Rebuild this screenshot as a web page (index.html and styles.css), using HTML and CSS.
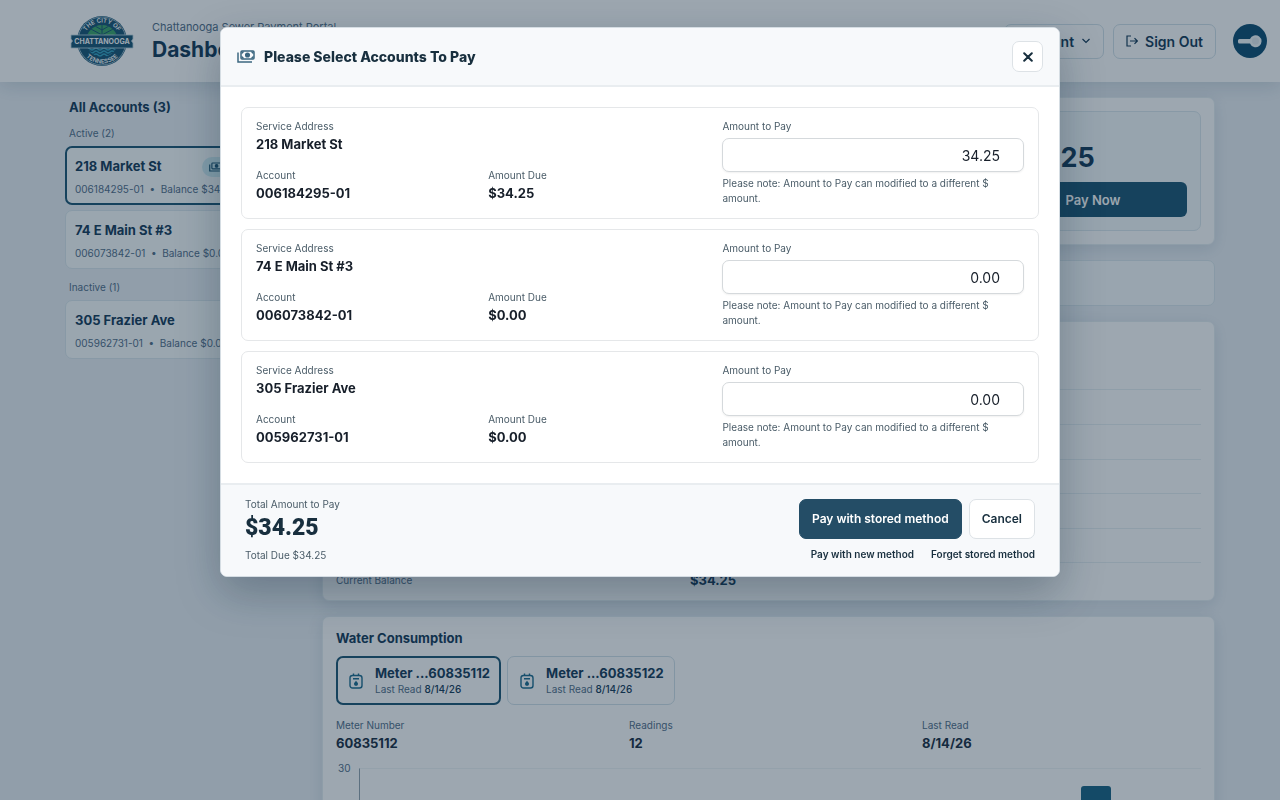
FILE: index.html
```html
<!DOCTYPE html>
<html lang="en">
<head>
    <meta charset="UTF-8">
    <meta name="viewport" content="width=device-width, initial-scale=1.0">
    <title>Dashboard</title>
    <link rel="stylesheet" href="styles.css">
</head>
<body>
    <header class="topbar">
        <svg class="logo" viewBox="0 0 64 52" role="img" aria-label="City logo">
            <defs>
                <path id="arcTop" d="M13.500 26a18.500 18.500 0 0 1 37 0"/>
                <path id="arcBottom" d="M9.500 26a22.500 22.500 0 0 0 45 0"/>
                <clipPath id="inner"><circle cx="32" cy="26" r="16"/></clipPath>
            </defs>
            <circle cx="32" cy="26" r="25" fill="#1a5676"/>
            <circle cx="32" cy="26" r="24" fill="none" stroke="#c3d8e2" stroke-width="0.7"/>
            <g clip-path="url(#inner)">
                <rect x="14" y="8" width="36" height="18" fill="#3fa66b"/>
                <rect x="14" y="26" width="36" height="18" fill="#1a5676"/>
                <path d="M32 8v16M32 15l-7-4M32 15l7-4M32 20l-13-7M32 20l13-7M32 24l-16-5M32 24l16-5" stroke="#1a5676" stroke-width="1" fill="none"/>
                <path d="M16 34q2-2 4 0t4 0 4 0 4 0 4 0 4 0 4 0 4 0M16 37q2-2 4 0t4 0 4 0 4 0 4 0 4 0 4 0 4 0M16 40q2-2 4 0t4 0 4 0 4 0 4 0 4 0 4 0 4 0" stroke="#38a5c4" stroke-width="1.4" fill="none"/>
            </g>
            <path d="M1 20h62v4l-1.500 2 1.500 2v5H1v-5l1.500-2L1 24z" fill="#1a5676" stroke="#c3d8e2" stroke-width="0.8"/>
            <text x="32" y="28.800" class="logo-name">CHATTANOOGA</text>
            <text class="logo-arc"><textPath href="#arcTop" startOffset="50%">THE CITY OF</textPath></text>
            <text class="logo-arc"><textPath href="#arcBottom" startOffset="50%">TENNESSEE</textPath></text>
        </svg>
        <div class="brand">
            <p>Chattanooga Sewer Payment Portal</p>
            <h1>Dashboard</h1>
        </div>
        <div class="actions">
            <button type="button" class="btn-outline">Account
                <svg width="10" height="10" viewBox="0 0 10 10" fill="none" stroke="currentColor" stroke-width="1.2"><path d="M1.500 3l3.500 3.500L8.500 3"/></svg>
            </button>
            <button type="button" class="btn-outline">
                <svg width="12" height="12" viewBox="0 0 12 12" fill="none" stroke="currentColor" stroke-width="1.2"><path d="M5 1H1v10h4M4 6h7.300M8.500 3.200L11.300 6 8.500 8.800"/></svg>
                Sign Out</button>
            <svg class="avatar" viewBox="0 0 34 34">
                <circle cx="17" cy="17" r="17" fill="#104f74"/>
                <path d="M6.500 15h10.500a6 6 0 1 1 0 4.500H6.500a1.500 1.500 0 0 1-1.500-1.500v-1.500a1.500 1.500 0 0 1 1.500-1.500z" fill="#f4f8fa"/>
                <circle cx="22.500" cy="17" r="3.500" fill="#e4ecf0"/>
            </svg>
        </div>
    </header>

    <div class="container">
        <aside class="sidebar">
            <h2>All Accounts (3)</h2>
            <h3>Active (2)</h3>
            <a href="#" class="account selected">
                <strong>218 Market St</strong>
                <span>006184295-01 &nbsp;•&nbsp; Balance $34.25</span>
                <em class="pill">
                    <svg width="13" height="10" viewBox="0 0 18 13" fill="none" stroke="currentColor" stroke-width="1.600"><path d="M1 3v9h14"/><rect x="4" y="1" width="13" height="8" rx="1"/><circle cx="10.500" cy="5" r="1.800" fill="currentColor"/></svg>
                </em>
            </a>
            <a href="#" class="account">
                <strong>74 E Main St #3</strong>
                <span>006073842-01 &nbsp;•&nbsp; Balance $0.00</span>
            </a>
            <h3>Inactive (1)</h3>
            <a href="#" class="account">
                <strong>305 Frazier Ave</strong>
                <span>005962731-01 &nbsp;•&nbsp; Balance $0.00</span>
            </a>
        </aside>

        <main class="main">
            <section class="card summary">
                <div class="due-box">
                    <p>Due</p>
                    <b>$34.25</b>
                    <button type="button">Pay Now</button>
                </div>
            </section>
            <section class="card strip"></section>
            <section class="card details">
                <div class="row row-first"></div>
                <div class="row"></div>
                <div class="row"></div>
                <div class="row"></div>
                <div class="row"></div>
                <div class="row"></div>
                <div class="row"><span>Current Balance</span><b>$34.25</b></div>
            </section>
            <section class="card usage">
                <h2>Water Consumption</h2>
                <div class="meters">
                    <button type="button" class="meter selected">
                        <svg width="14" height="16" viewBox="0 0 14 16" fill="none" stroke="currentColor" stroke-width="1.400"><rect x="1" y="2.500" width="12" height="12.500" rx="2.500"/><path d="M4.500 0.500V3M9.500 0.500V3M4 5.800h6"/><path d="M7 7.800l1.800 2.200a2 2 0 1 1-3.600 0z" fill="currentColor" stroke="none"/></svg>
                        <span><strong>Meter ...60835112</strong><small>Last Read <b>8/14/26</b></small></span>
                    </button>
                    <button type="button" class="meter">
                        <svg width="14" height="16" viewBox="0 0 14 16" fill="none" stroke="currentColor" stroke-width="1.400"><rect x="1" y="2.500" width="12" height="12.500" rx="2.500"/><path d="M4.500 0.500V3M9.500 0.500V3M4 5.800h6"/><path d="M7 7.800l1.800 2.200a2 2 0 1 1-3.600 0z" fill="currentColor" stroke="none"/></svg>
                        <span><strong>Meter ...60835122</strong><small>Last Read <b>8/14/26</b></small></span>
                    </button>
                </div>
                <div class="stats">
                    <div><span>Meter Number</span><b>60835112</b></div>
                    <div><span>Readings</span><b>12</b></div>
                    <div><span>Last Read</span><b>8/14/26</b></div>
                </div>
                <div class="chart">
                    <span class="tick">30</span>
                    <div class="bars">
                        <i style="height: 40%"></i>
                        <i style="height: 45%"></i>
                        <i style="height: 50%"></i>
                        <i style="height: 42%"></i>
                        <i style="height: 55%"></i>
                        <i style="height: 60%"></i>
                        <i style="height: 48%"></i>
                        <i style="height: 52%"></i>
                        <i style="height: 58%"></i>
                        <i style="height: 62%"></i>
                        <i style="height: 91%"></i>
                        <i style="height: 50%"></i>
                    </div>
                </div>
            </section>
        </main>
    </div>

    <div class="backdrop">
        <form class="modal" role="dialog" aria-modal="true" aria-labelledby="modalTitle">
            <div class="modal-header">
                <svg width="18" height="13" viewBox="0 0 18 13" fill="none" stroke="currentColor" stroke-width="1.500"><path d="M1 2.500v9.500h14"/><rect x="4" y="1" width="13" height="8" rx="1"/><circle cx="10.500" cy="5" r="1.800" fill="currentColor"/><path d="M4.500 3.500l2-2M16.500 3.500l-2-2M4.500 6.500l2 2M16.500 6.500l-2 2"/></svg>
                <h2 id="modalTitle">Please Select Accounts To Pay</h2>
                <button type="button" class="close" aria-label="Close">
                    <svg width="10" height="10" viewBox="0 0 10 10" stroke="currentColor" stroke-width="2" stroke-linecap="round"><path d="M1.200 1.200l7.600 7.600M8.800 1.200L1.200 8.800"/></svg>
                </button>
            </div>
            <div class="modal-body">
                <div class="pay-card">
                    <div class="info">
                        <div class="wide"><span>Service Address</span><b>218 Market St</b></div>
                        <div><span>Account</span><b>006184295-01</b></div>
                        <div><span>Amount Due</span><b>$34.25</b></div>
                    </div>
                    <div class="amount">
                        <label for="pay1">Amount to Pay</label>
                        <input type="text" id="pay1" inputmode="decimal" value="34.25">
                        <p>Please note: Amount to Pay can modified to a different $ amount.</p>
                    </div>
                </div>
                <div class="pay-card">
                    <div class="info">
                        <div class="wide"><span>Service Address</span><b>74 E Main St #3</b></div>
                        <div><span>Account</span><b>006073842-01</b></div>
                        <div><span>Amount Due</span><b>$0.00</b></div>
                    </div>
                    <div class="amount">
                        <label for="pay2">Amount to Pay</label>
                        <input type="text" id="pay2" inputmode="decimal" value="0.00">
                        <p>Please note: Amount to Pay can modified to a different $ amount.</p>
                    </div>
                </div>
                <div class="pay-card">
                    <div class="info">
                        <div class="wide"><span>Service Address</span><b>305 Frazier Ave</b></div>
                        <div><span>Account</span><b>005962731-01</b></div>
                        <div><span>Amount Due</span><b>$0.00</b></div>
                    </div>
                    <div class="amount">
                        <label for="pay3">Amount to Pay</label>
                        <input type="text" id="pay3" inputmode="decimal" value="0.00">
                        <p>Please note: Amount to Pay can modified to a different $ amount.</p>
                    </div>
                </div>
            </div>
            <div class="modal-footer">
                <div class="totals">
                    <span>Total Amount to Pay</span>
                    <b>$34.25</b>
                    <span>Total Due $34.25</span>
                </div>
                <div class="choices">
                    <div class="buttons">
                        <button type="submit" class="primary">Pay with stored method</button>
                        <button type="button" class="cancel">Cancel</button>
                    </div>
                    <div class="links">
                        <a href="#">Pay with new method</a>
                        <a href="#">Forget stored method</a>
                    </div>
                </div>
            </div>
        </form>
    </div>
</body>
</html>
```
FILE: styles.css
```css
* {
    box-sizing: border-box;
}
body {
    font-family: Inter, "Liberation Sans", sans-serif;
    font-size: 13px;
    color: #173c5a;
    background: #ecf1f6;
    margin: 0;
    height: 100vh;
    overflow: hidden;
}
h1, h2, h3, p {
    margin: 0;
}
button, input {
    font-family: inherit;
    color: inherit;
}
a {
    text-decoration: none;
    color: inherit;
}

/* top bar */
.topbar {
    display: flex;
    align-items: center;
    height: 82px;
    padding: 0 13px 0 70px;
    background: white;
    box-shadow: 0 4px 18px rgba(20, 60, 90, 0.15);
}
.logo {
    width: 64px;
    height: 52px;
}
.logo-name {
    font-size: 7px;
    font-weight: 700;
    fill: white;
    text-anchor: middle;
}
.logo-arc {
    font-size: 6px;
    font-weight: 600;
    fill: white;
    text-anchor: middle;
}
.brand {
    margin-left: 18px;
    padding-top: 3px;
}
.brand p {
    font-size: 11px;
    line-height: 14px;
    color: #54708a;
}
.brand h1 {
    font-size: 21px;
    line-height: 32px;
}
.actions {
    display: flex;
    align-items: center;
    gap: 9px;
    margin-left: auto;
}
.btn-outline {
    display: flex;
    align-items: center;
    gap: 7px;
    height: 35px;
    padding: 0 12px;
    font-size: 14px;
    font-weight: 600;
    background: white;
    border: 1px solid #d3e2ea;
    border-radius: 7px;
}
.avatar {
    width: 34px;
    height: 34px;
    margin-left: 8px;
}

/* page */
.container {
    display: flex;
    gap: 15px;
    padding: 15px 65px;
}
.sidebar {
    flex: 0 0 242px;
}
.sidebar h2, .usage h2 {
    font-size: 13px;
    line-height: 20px;
}
.sidebar h2 {
    padding: 0 4px;
    margin-bottom: 3px;
}
.sidebar h3 {
    padding: 6px 4px;
    font-size: 10px;
    line-height: 14px;
    font-weight: 400;
    color: #54708a;
}
.account {
    display: block;
    position: relative;
    height: 59px;
    margin-bottom: 5px;
    padding: 9px;
    background: #fafdfe;
    border: 1px solid #dce8ee;
    border-radius: 7px;
}
.account.selected {
    border: 2px solid #1e5775;
    padding: 8px;
}
.account strong, .account span {
    display: block;
}
.account strong {
    line-height: 20px;
}
.account span {
    margin-top: 6px;
    font-size: 10px;
    line-height: 14px;
    color: #54708a;
}
.pill {
    position: absolute;
    top: 9px;
    right: 9px;
    display: flex;
    align-items: center;
    width: 94px;
    height: 20px;
    padding-left: 7px;
    border-radius: 10px;
    background: #d2eef4;
    color: #1e5775;
}
.main {
    flex: 1;
    display: flex;
    flex-direction: column;
    gap: 15px;
    min-width: 0;
}
.card {
    background: white;
    border: 1px solid #e6eef2;
    border-radius: 7px;
    padding: 13px;
    box-shadow: 0 4px 16px rgba(20, 60, 90, 0.12);
}
.summary {
    display: flex;
    justify-content: flex-end;
}
.due-box {
    width: 216px;
    height: 120px;
    padding: 13px;
    background: #f5fafc;
    border: 1px solid #dce8ee;
    border-radius: 7px;
}
.due-box p {
    font-size: 10px;
    line-height: 14px;
    color: #54708a;
}
.due-box b {
    display: block;
    font-size: 27px;
    line-height: 38px;
}
.due-box button {
    width: 100%;
    height: 35px;
    margin-top: 5px;
    border: none;
    border-radius: 6px;
    background: #1e5775;
    color: white;
    font-size: 13px;
    font-weight: 600;
}
.strip {
    height: 46px;
    background: #f8fcfd;
    border-color: #dce8ee;
    box-shadow: none;
}
.details {
    display: flex;
    flex-direction: column;
    height: 280px;
    padding-top: 0;
    padding-bottom: 3px;
}
.row {
    flex: 1;
    display: flex;
    align-items: center;
    font-size: 10px;
    color: #54708a;
    border-bottom: 1px solid #e8f0f4;
}
.row-first {
    flex: 2;
}
.row:last-child {
    border-bottom: none;
}
.row span {
    width: 354px;
}
.row b {
    font-size: 13px;
    color: #173c5a;
}
.usage h2 {
    margin: -2px 0 8px;
}
.meters {
    display: flex;
    gap: 6px;
}
.meter {
    display: flex;
    align-items: center;
    gap: 12px;
    height: 49px;
    padding: 0 10px 0 12px;
    background: white;
    border: 1px solid #d3e2ea;
    border-radius: 7px;
    text-align: left;
}
.meter.selected {
    border: 2px solid #1e5775;
    padding: 0 9px 0 11px;
}
.meter svg {
    color: #1f6d90;
}
.meter strong, .meter small {
    display: block;
}
.meter strong {
    font-size: 13px;
    line-height: 18px;
    font-weight: 700;
}
.meter small {
    font-size: 10px;
    line-height: 15px;
    color: #54708a;
}
.meter b {
    font-weight: 500;
    color: #173c5a;
}
.stats {
    display: flex;
    gap: 14px;
    margin-top: 12px;
}
.stats div {
    flex: 1;
}
.stats span, .stats b {
    display: block;
}
.stats span {
    font-size: 10px;
    line-height: 16px;
    color: #54708a;
}
.stats b {
    font-size: 13px;
    line-height: 20px;
    color: #1c2f44;
}
.chart {
    display: flex;
    gap: 8px;
    margin-top: 15px;
    padding-left: 2px;
}
.tick {
    font-size: 10px;
    line-height: 14px;
    margin-top: -7px;
    color: #54708a;
}
.bars {
    flex: 1;
    display: flex;
    align-items: flex-end;
    height: 190px;
    border-left: 1px solid #93a3b0;
    border-top: 1px solid #f0f5f7;
}
.bars i {
    width: 30px;
    margin: 0 auto;
    background: #1c6585;
    border-radius: 3px 3px 0 0;
}

/* payment dialog */
.backdrop {
    position: fixed;
    inset: 0;
    display: flex;
    justify-content: center;
    align-items: flex-start;
    padding: 27px 20px;
    background: rgba(10, 35, 57, 0.4);
}
.modal {
    width: 100%;
    max-width: 840px;
    background: white;
    border: 1px solid #d5dde3;
    border-radius: 7px;
    box-shadow: 0 16px 44px rgba(10, 35, 57, 0.3);
    color: #182f3e;
    overflow: hidden;
}
.modal-header {
    display: flex;
    align-items: center;
    gap: 9px;
    height: 59px;
    padding: 0 16px 0 16px;
    background: #f7f9fb;
    border-bottom: 2px solid #e9edf0;
}
.modal-header svg {
    color: #3c6780;
}
.modal-header h2 {
    font-size: 14px;
    font-weight: 800;
}
.close {
    display: flex;
    align-items: center;
    justify-content: center;
    width: 31px;
    height: 31px;
    margin-left: auto;
    padding: 0;
    background: white;
    border: 1px solid #dde2e6;
    border-radius: 7px;
}
.modal-header .close svg {
    color: #182f3e;
}
.modal-body {
    display: flex;
    flex-direction: column;
    gap: 10px;
    padding: 20px;
}
.pay-card {
    display: grid;
    grid-template-columns: 3fr 2fr;
    gap: 14px;
    padding: 10px 14px 12px;
    border: 1px solid #e5e7e9;
    border-radius: 7px;
}
.info {
    display: grid;
    grid-template-columns: 1fr 1fr;
    column-gap: 12px;
    row-gap: 13px;
    align-content: start;
}
.wide {
    grid-column: span 2;
}
.info span, .info b {
    display: block;
}
.info span, .amount label {
    font-size: 10px;
    line-height: 16px;
    color: #4a5c68;
}
.info b {
    font-size: 13px;
    line-height: 20px;
    color: #171f2a;
}
.amount label {
    display: block;
    margin-bottom: 4px;
}
.amount input {
    display: block;
    width: 100%;
    height: 34px;
    padding: 0 23px;
    border: 1px solid #d5d9dc;
    border-radius: 7px;
    box-shadow: 0 1px 2px rgba(0, 0, 0, 0.06);
    font-size: 14px;
    color: #171f2a;
    text-align: right;
}
.amount p {
    margin-top: 4px;
    font-size: 10px;
    line-height: 15px;
    color: #4a5c68;
}
.modal-footer {
    display: flex;
    justify-content: space-between;
    align-items: center;
    padding: 12px 24px 14px;
    background: #f7f9fb;
    border-top: 2px solid #e9edf0;
}
.totals span {
    display: block;
    font-size: 10px;
    line-height: 14px;
    color: #4a5c68;
}
.totals b {
    display: block;
    margin-bottom: 3px;
    font-family: Roboto, Inter, sans-serif;
    font-size: 23px;
    line-height: 34px;
    font-weight: 900;
}
.buttons, .links {
    display: flex;
    justify-content: flex-end;
}
.buttons {
    gap: 7px;
}
.buttons button {
    height: 40px;
    padding: 0 12px;
    border: 1px solid #dde2e6;
    border-radius: 7px;
    background: white;
    font-size: 12px;
    font-weight: 600;
}
.buttons .primary {
    background: #244d66;
    border-color: #244d66;
    color: white;
}
.links {
    gap: 17px;
    margin-top: 8px;
    font-size: 10px;
    line-height: 14px;
    font-weight: 600;
}
```
